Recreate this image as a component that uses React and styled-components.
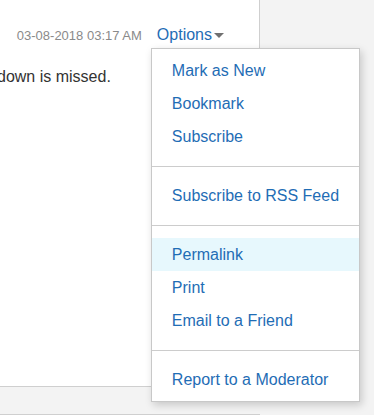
import React from "react";
import styled, { createGlobalStyle } from "styled-components";

const GlobalStyle = createGlobalStyle`
  html, body {
    margin: 0;
    padding: 0;
    background: #f3f3f3;
    font-family: "Liberation Sans", Arial, sans-serif;
    overflow: hidden;
  }
`;

const Page = styled.div`
  width: 374px;
  height: 415px;
  overflow: hidden;
`;

const Card = styled.div`
  width: 259px;
  height: 386px;
  background: #fff;
  border-right: 1px solid #cfcfcf;
  border-bottom: 1px solid #cfcfcf;
`;

const NextCard = styled.div`
  width: 259px;
  height: 20px;
  margin-top: 27px;
  background: #fff;
  border-top: 1px solid #cfcfcf;
  border-right: 1px solid #cfcfcf;
`;

const Header = styled.div`
  display: flex;
  justify-content: flex-end;
  align-items: baseline;
  gap: 15px;
  padding: 25px 35px 0 0;
`;

const Timestamp = styled.span`
  font-size: 13px;
  line-height: 20px;
  color: #8a8a8a;
`;

const Dropdown = styled.div`
  position: relative;
  display: flex;
  align-items: center;
  gap: 2px;
`;

const Toggle = styled.span`
  font-size: 16px;
  line-height: 20px;
  color: #1f6db5;
  cursor: pointer;
`;

const Caret = styled.span`
  width: 0;
  height: 0;
  border-left: 5px solid transparent;
  border-right: 5px solid transparent;
  border-top: 5px solid #707070;
`;

const Body = styled.p`
  margin: 21px 0 0 -3px;
  font-size: 16px;
  line-height: 20px;
  color: #333;
  white-space: nowrap;
`;

const Menu = styled.ul`
  position: absolute;
  top: calc(100% + 3px);
  left: -6px;
  width: 207px;
  margin: 0;
  padding: 5px 0;
  list-style: none;
  background: #fff;
  border: 1px solid #c8c8c8;
  box-shadow: 2px 3px 8px rgba(0, 0, 0, 0.18);
  z-index: 5;
`;

const Item = styled.li`
  height: 33px;
  padding-left: 20px;
  font-size: 16px;
  line-height: 33px;
  color: #1f6db5;
  white-space: nowrap;
  background: ${(props) => (props.active ? "#e7f8fd" : "transparent")};
  cursor: pointer;
`;

const Divider = styled.li`
  height: 1px;
  margin: 13px 0 12px;
  background: #cccccc;
`;

const groups = [
  ["Mark as New", "Bookmark", "Subscribe"],
  ["Subscribe to RSS Feed"],
  ["Permalink", "Print", "Email to a Friend"],
  ["Report to a Moderator"],
];

const App = () => {
  return (
    <Page>
      <GlobalStyle />
      <Card>
        <Header>
          <Timestamp>03-08-2018 03:17 AM</Timestamp>
          <Dropdown>
            <Toggle>Options</Toggle>
            <Caret />
            <Menu>
              {groups.map((group, gi) => (
                <React.Fragment key={gi}>
                  {gi > 0 && <Divider />}
                  {group.map((label) => (
                    <Item key={label} active={label === "Permalink"}>
                      {label}
                    </Item>
                  ))}
                </React.Fragment>
              ))}
            </Menu>
          </Dropdown>
        </Header>
        <Body>down is missed.</Body>
      </Card>
      <NextCard />
    </Page>
  );
};

export default App;
